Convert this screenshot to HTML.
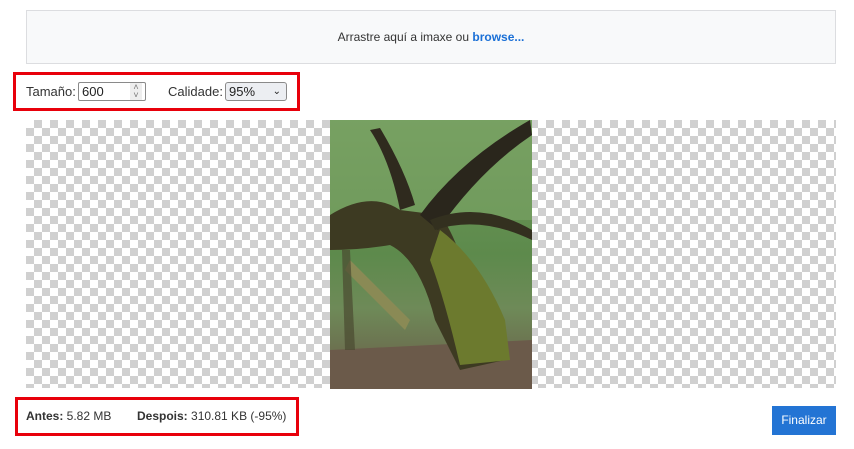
<!DOCTYPE html>
<html><head><meta charset="utf-8"><style>
body{margin:0;width:854px;height:449px;background:#fff;font-family:"Liberation Sans",sans-serif;color:#222;position:relative;overflow:hidden}
.drop{position:absolute;left:26px;top:10px;width:808px;height:52px;background:#f8f9fa;border:1px solid #dcdde0;font-size:12px;text-align:center;line-height:52px;color:#333}
.drop a{color:#1a6fd6;font-weight:bold;text-decoration:none}
.red{position:absolute;border:3px solid #e8000b}
.lbl{position:absolute;font-size:13px;color:#333}
.checker{position:absolute;left:26px;top:120px;width:810px;height:268px;
background-color:#fff;background-image:linear-gradient(45deg,#d0d0d0 25%,transparent 25%,transparent 75%,#d0d0d0 75%),linear-gradient(45deg,#d0d0d0 25%,transparent 25%,transparent 75%,#d0d0d0 75%);background-size:16px 16px;background-position:0 0,8px 8px}
.btn{position:absolute;left:772px;top:406px;width:64px;height:29px;background:#2374d4;color:#fff;font-size:12px;text-align:center;line-height:29px}
</style></head><body>
<div class="drop">Arrastre aquí a imaxe ou <a>browse...</a></div>
<div class="red" style="left:13px;top:72px;width:281px;height:33px"></div>
<div class="lbl" style="left:26px;top:84px">Tamaño:</div>
<div style="position:absolute;left:78px;top:82px;border:1px solid #8a8a8a;border-radius:2px;font-size:13px;line-height:17px;padding-left:3px;box-sizing:border-box;width:68px;height:19px">600<span style="position:absolute;right:3px;top:0;font-size:9px;color:#777;line-height:8px;background:#eee;width:12px;text-align:center;height:17px">˄<br>˅</span></div>
<div class="lbl" style="left:168px;top:84px">Calidade:</div>
<div style="position:absolute;left:225px;top:82px;width:62px;height:19px;border:1px solid #8a8a8a;border-radius:3px;background:#eceef2;box-sizing:border-box;font-size:13px;line-height:17px;padding-left:3px">95%<span style="position:absolute;right:5px;top:0;font-size:10px">⌄</span></div>
<div class="checker"></div>
<svg style="position:absolute;left:330px;top:120px" width="202" height="269" viewBox="0 0 202 269">
<defs><linearGradient id="g" x1="0" y1="0" x2="0" y2="1"><stop offset="0" stop-color="#6f9a5a"/><stop offset="0.5" stop-color="#5d8a4c"/><stop offset="0.7" stop-color="#6e8a58"/><stop offset="1" stop-color="#6a5a48"/></linearGradient></defs>
<rect width="202" height="269" fill="url(#g)"/>
<rect y="0" width="202" height="100" fill="#7fa86a" opacity=".5"/>
<path d="M0 230 L202 220 L202 269 L0 269Z" fill="#6b5a4a"/>
<path d="M0 95 Q40 70 70 90 L110 95 Q130 120 145 190 L175 240 L130 250 L105 200 Q90 140 60 125 Q30 130 0 130Z" fill="#3d3a22"/>
<path d="M110 110 Q150 140 175 200 L180 240 L130 245 Q115 180 100 140Z" fill="#6c7a2e"/>
<path d="M70 90 Q60 40 40 10 L50 8 Q75 50 85 85Z" fill="#2f2a1e"/>
<path d="M90 95 Q130 40 200 0 L202 15 Q150 50 108 110Z" fill="#2a261c"/>
<path d="M100 100 Q150 80 202 110 L202 120 Q150 95 105 110Z" fill="#33301f"/>
<path d="M20 140 Q50 170 80 200 L75 210 Q45 180 15 150Z" fill="#8a8a55"/>
<path d="M20 130 L25 230 L15 230 L12 130Z" fill="#4a4a30" opacity=".7"/>
</svg>
<div class="red" style="left:15px;top:397px;width:278px;height:33px"></div>
<div class="lbl" style="left:26px;top:409px;font-size:12px"><b>Antes:</b> 5.82 MB</div>
<div class="lbl" style="left:137px;top:409px;font-size:12px"><b>Despois:</b> 310.81 KB (-95%)</div>
<div class="btn">Finalizar</div>
</body></html>
